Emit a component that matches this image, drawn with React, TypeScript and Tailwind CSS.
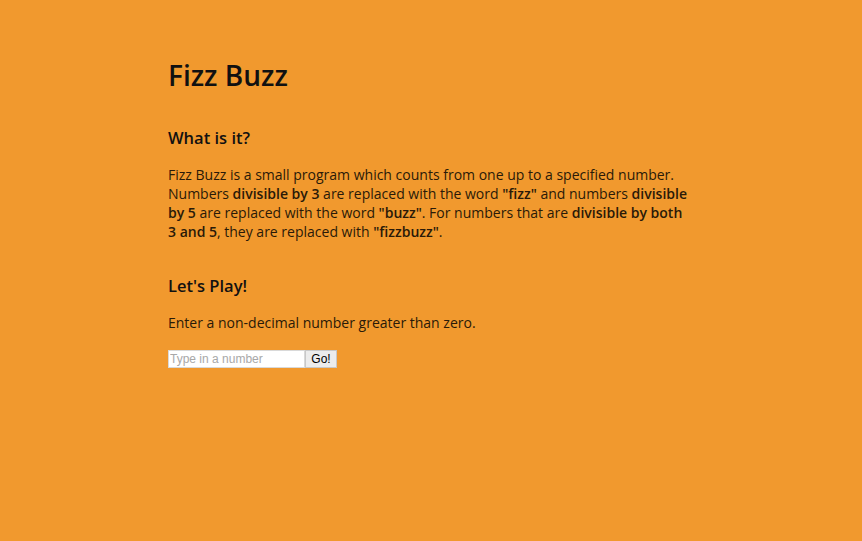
const App = () => {
  return (
    <div className="min-h-[541px] w-full bg-[#f1992e] text-[#2a1a08] font-['Open_Sans',sans-serif]">
      <div className="mx-auto w-[526px] pt-[58px]">
        {/* Title */}
        <h1 className="text-[28px] leading-[34px] font-semibold text-[#111]">Fizz Buzz</h1>

        {/* About */}
        <h2 className="mt-[36px] text-[16.5px] leading-[20px] font-semibold text-[#111]">What is it?</h2>
        <p className="mt-[17px] w-[521px] text-[14px] leading-[19px]">
          Fizz Buzz is a small program which counts from one up to a specified number. Numbers{" "}
          <b className="font-semibold">divisible by 3</b> are replaced with the word{" "}
          <b className="font-semibold">"fizz"</b> and numbers <b className="font-semibold">divisible by 5</b> are
          replaced with the word <b className="font-semibold">"buzz"</b>. For numbers that are{" "}
          <b className="font-semibold">divisible by both 3 and 5</b>, they are replaced with{" "}
          <b className="font-semibold">"fizzbuzz"</b>.
        </p>

        {/* Play */}
        <h2 className="mt-[35px] text-[16.5px] leading-[20px] font-semibold text-[#111]">Let's Play!</h2>
        <p className="mt-[17px] text-[14px] leading-[19px]">Enter a non-decimal number greater than zero.</p>

        <div className="mt-[18px] flex items-stretch h-[18px]">
          <input
            type="text"
            placeholder="Type in a number"
            className="w-[137px] h-[18px] bg-white border border-[#d9d9d9] px-[1px] text-[12px] font-['Liberation_Sans',sans-serif] placeholder:text-[#a8a8a8] outline-none"
          />
          <button className="w-[32px] h-[18px] bg-[#ececec] border border-[#c8c8c8] text-[12px] leading-none text-black font-['Liberation_Sans',sans-serif]">
            Go!
          </button>
        </div>
      </div>
    </div>
  );
};

export default App;
